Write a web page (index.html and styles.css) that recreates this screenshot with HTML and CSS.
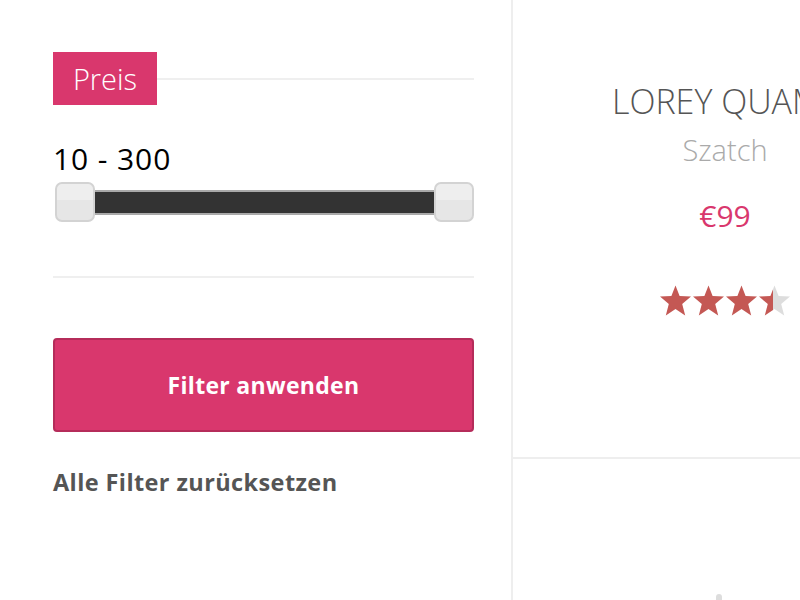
FILE: index.html
```html
<!DOCTYPE html>
<html lang="de">
<head>
<meta charset="utf-8">
<link rel="stylesheet" href="styles.css">
</head>
<body>
<div class="page">
  <aside class="filters">
    <div class="filter-head">
      <span class="tag">Preis</span>
      <span class="head-line"></span>
    </div>
    <div class="range-value">10 - 300</div>
    <div class="slider">
      <span class="handle"></span>
      <span class="track"></span>
      <span class="handle"></span>
    </div>
    <hr class="sep">
    <button class="apply">Filter anwenden</button>
    <a class="reset">Alle Filter zurücksetzen</a>
  </aside>
  <main class="products">
    <div class="card">
      <div class="title">LOREY QUAM DOLOR</div>
      <div class="brand">Szatch</div>
      <div class="price">€99</div>
      <div class="stars">
        <svg width="132" height="32" viewBox="0 0 132 32">
          <defs>
            <path id="st" d="M16.5 0.5 L20.6 11 L32 11.6 L23.2 18.9 L26.2 30.5 L16.5 24 L6.8 30.5 L9.8 18.9 L1 11.6 L12.4 11 Z"/>
            <linearGradient id="halfFill" x1="0" y1="0" x2="1" y2="0">
              <stop offset="0.45" stop-color="#c45854"/>
              <stop offset="0.45" stop-color="#dddddd"/>
            </linearGradient>
          </defs>
          <g fill="#c45854">
            <use href="#st" x="0"/>
            <use href="#st" x="33"/>
            <use href="#st" x="66"/>
          </g>
          <use href="#st" x="99" fill="url(#halfFill)"/>
        </svg>
      </div>
    </div>
    <div class="card lower">
      <span class="dot"></span>
    </div>
  </main>
</div>
</body>
</html>
```
FILE: styles.css
```css
html, body {
  margin: 0;
  padding: 0;
  background: #fff;
}
.page {
  display: flex;
  width: 800px;
  height: 600px;
  overflow: hidden;
}
.filters {
  flex: 0 0 421px;
  padding: 52px 37px 0 53px;
  font-family: "Open Sans", sans-serif;
}
.filter-head {
  display: flex;
  align-items: center;
}
.tag {
  background: #d9376d;
  color: #fff;
  font-weight: 300;
  font-size: 29px;
  line-height: 53px;
  height: 53px;
  width: 104px;
  text-align: center;
  box-sizing: border-box;
}
.head-line {
  flex: 1;
  height: 2px;
  background: #efefef;
}
.range-value {
  margin-top: 34px;
  font-size: 30px;
  line-height: 40px;
  color: #000;
  letter-spacing: 0.9px;
}
.slider {
  display: flex;
  align-items: center;
  margin-top: 3px;
  padding-left: 2px;
  width: 419px;
}
.handle {
  flex: 0 0 auto;
  width: 36px;
  height: 36px;
  border: 2px solid #d3d3d3;
  border-radius: 7px;
  background: linear-gradient(#eeeeee 0 45%, #e6e6e6 45% 100%);
  position: relative;
  z-index: 1;
}
.track {
  flex: 1;
  height: 21px;
  background: #333;
  border: 2px solid #a9a9a9;
  border-left: 0;
  border-right: 0;
  margin: 0 -1px;
}
.sep {
  border: 0;
  height: 2px;
  background: #efefef;
  margin: 54px 0 0;
}
.apply {
  display: block;
  width: 421px;
  height: 94px;
  margin-top: 60px;
  background: #d9376d;
  border: 2px solid #b52c5a;
  border-radius: 4px;
  color: #fff;
  font-family: "Open Sans", sans-serif;
  font-weight: 700;
  font-size: 23px;
  letter-spacing: 0.3px;
}
.reset {
  display: block;
  margin-top: 34px;
  color: #555;
  font-weight: 700;
  font-size: 23.5px;
  letter-spacing: 0.4px;
}
.products {
  flex: 1;
  border-left: 2px solid #eeeeee;
  font-family: "Open Sans", sans-serif;
  font-weight: 300;
}
.card {
  width: 424px;
  height: 459px;
  border-bottom: 2px solid #eeeeee;
  display: flex;
  flex-direction: column;
  align-items: center;
  box-sizing: border-box;
}
.title {
  align-self: flex-start;
  margin: 78px 0 0 99px;
  white-space: nowrap;
  font-size: 34px;
  line-height: 46px;
  color: #555;
}
.brand {
  margin-top: 6px;
  font-size: 29px;
  line-height: 40px;
  color: #aaa;
}
.price {
  margin-top: 26px;
  font-size: 30px;
  line-height: 40px;
  color: #d9376d;
  font-weight: 400;
}
.stars {
  margin-top: 49px;
  height: 32px;
  line-height: 0;
  filter: blur(0.5px);
}
.card.lower {
  border-bottom: 0;
  height: 141px;
  position: relative;
}
.dot {
  position: absolute;
  left: 203px;
  top: 135px;
  width: 6px;
  height: 10px;
  border-radius: 3px;
  background: #ddd;
}
```
